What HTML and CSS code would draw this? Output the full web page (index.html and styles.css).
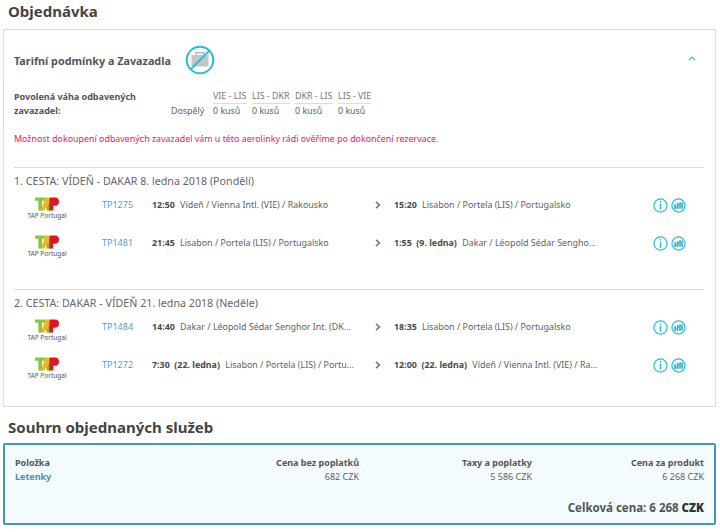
FILE: index.html
```html
<!DOCTYPE html>
<html lang="cs">
<head>
<meta charset="utf-8">
<title>Objednávka</title>
<link rel="stylesheet" href="styles.css">
</head>
<body>
<svg class="defs" width="0" height="0" aria-hidden="true">
  <defs>
    <symbol id="tap" viewBox="0 0 26 15">
      <path d="M0 0.5H11V4H7.6V14.5H3.6V4H0Z" fill="#8cc63f"/>
      <path d="M6.5 14.5L11.4 0.5H14.5L18 10V14.5H14.2L13.6 12.4H10.8L10.2 14.5Z" fill="#e8b81c"/>
      <path d="M12 14.5L14.5 7L17 14.5Z" fill="#7fbf3a"/>
      <path d="M15.5 0.5H22C25 0.5 26 2.5 26 4.8C26 7.4 24.4 9.4 21.5 9.4H19.6V14.5H15.5Z" fill="#e3141f"/>
    </symbol>
    <symbol id="info" viewBox="0 0 16 16">
      <circle cx="8" cy="8" r="7" fill="#fff" stroke="#2cbcd8" stroke-width="1.3"/>
      <rect x="7.2" y="3.2" width="1.6" height="1.7" fill="#2cbcd8"/>
      <rect x="7.2" y="6.2" width="1.6" height="6.4" fill="#2cbcd8"/>
    </symbol>
    <symbol id="seat" viewBox="0 0 16 16">
      <circle cx="8" cy="8" r="7" fill="#fff" stroke="#2cbcd8" stroke-width="1.3"/>
      <path d="M3.6 6.6H5.6V11.4H3.6ZM6.4 5.4H8V11.4H6.4ZM8.8 4.4H10.4V11.4H8.8ZM11 5.6H12.6V11.4H11Z" fill="#2ba6c9"/>
      <path d="M2.6 12.2L13.2 3.8" stroke="#2cbcd8" stroke-width="1"/>
    </symbol>
  </defs>
</svg>

<h1 class="heading">Objednávka</h1>

<section class="panel">
  <div class="tariff-head">
    <h2 class="tariff-title">Tarifní podmínky a Zavazadla</h2>
    <svg class="no-bag" viewBox="0 0 30 30" aria-hidden="true">
      <path d="M11 10V7.8H19V10" fill="none" stroke="#b5b5b5" stroke-width="1.4"/>
      <rect x="6.5" y="10" width="17" height="11.5" rx="1" fill="#c4c4c4"/>
      <circle cx="15" cy="15" r="13.3" fill="none" stroke="#2cbcd8" stroke-width="2"/>
      <path d="M24.4 5.6L5.6 24.4" stroke="#2cbcd8" stroke-width="2"/>
    </svg>
    <svg class="chevron" viewBox="0 0 8 5" aria-hidden="true"><path d="M0.8 4.2L4 1L7.2 4.2" fill="none" stroke="#2cbcd8" stroke-width="1.1"/></svg>
  </div>

  <div class="baggage">
    <div class="baggage-label">Povolená váha odbavených zavazadel:</div>
    <div class="baggage-table">
      <span></span>
      <span class="seg">VIE - LIS</span>
      <span class="seg">LIS - DKR</span>
      <span class="seg">DKR - LIS</span>
      <span class="seg">LIS - VIE</span>
      <span class="pax">Dospělý</span>
      <span class="cnt">0 kusů</span>
      <span class="cnt">0 kusů</span>
      <span class="cnt">0 kusů</span>
      <span class="cnt">0 kusů</span>
    </div>
  </div>

  <p class="notice">Možnost dokoupení odbavených zavazadel vám u této aerolinky rádi ověříme po dokončení rezervace.</p>

  <div class="journey">
    <h3 class="journey-title">1. CESTA: VÍDEŇ - DAKAR 8. ledna 2018 (Pondělí)</h3>
    <div class="flight">
      <div class="airline"><svg class="tap"><use href="#tap"/></svg><span class="tap-name">TAP Portugal</span></div>
      <a class="code">TP1275</a>
      <div class="point"><b>12:50</b> Vídeň / Vienna Intl. (VIE) / Rakousko</div>
      <svg class="arrow" viewBox="0 0 6 8"><path d="M1 0.8L4.4 4L1 7.2" fill="none" stroke="#777" stroke-width="1.6"/></svg>
      <div class="point"><b>15:20</b> Lisabon / Portela (LIS) / Portugalsko</div>
      <div class="icons"><svg class="ico"><use href="#info"/></svg><svg class="ico"><use href="#seat"/></svg></div>
    </div>
    <div class="flight">
      <div class="airline"><svg class="tap"><use href="#tap"/></svg><span class="tap-name">TAP Portugal</span></div>
      <a class="code">TP1481</a>
      <div class="point"><b>21:45</b> Lisabon / Portela (LIS) / Portugalsko</div>
      <svg class="arrow" viewBox="0 0 6 8"><path d="M1 0.8L4.4 4L1 7.2" fill="none" stroke="#777" stroke-width="1.6"/></svg>
      <div class="point"><b>1:55 &nbsp;(9. ledna)</b> Dakar / Léopold Sédar Sengho…</div>
      <div class="icons"><svg class="ico"><use href="#info"/></svg><svg class="ico"><use href="#seat"/></svg></div>
    </div>
  </div>

  <div class="journey">
    <h3 class="journey-title">2. CESTA: DAKAR - VÍDEŇ 21. ledna 2018 (Neděle)</h3>
    <div class="flight">
      <div class="airline"><svg class="tap"><use href="#tap"/></svg><span class="tap-name">TAP Portugal</span></div>
      <a class="code">TP1484</a>
      <div class="point"><b>14:40</b> Dakar / Léopold Sédar Senghor Int. (DK…</div>
      <svg class="arrow" viewBox="0 0 6 8"><path d="M1 0.8L4.4 4L1 7.2" fill="none" stroke="#777" stroke-width="1.6"/></svg>
      <div class="point"><b>18:35</b> Lisabon / Portela (LIS) / Portugalsko</div>
      <div class="icons"><svg class="ico"><use href="#info"/></svg><svg class="ico"><use href="#seat"/></svg></div>
    </div>
    <div class="flight">
      <div class="airline"><svg class="tap"><use href="#tap"/></svg><span class="tap-name">TAP Portugal</span></div>
      <a class="code">TP1272</a>
      <div class="point"><b>7:30 &nbsp;(22. ledna)</b> Lisabon / Portela (LIS) / Portu…</div>
      <svg class="arrow" viewBox="0 0 6 8"><path d="M1 0.8L4.4 4L1 7.2" fill="none" stroke="#777" stroke-width="1.6"/></svg>
      <div class="point"><b>12:00 &nbsp;(22. ledna)</b> Vídeň / Vienna Intl. (VIE) / Ra…</div>
      <div class="icons"><svg class="ico"><use href="#info"/></svg><svg class="ico"><use href="#seat"/></svg></div>
    </div>
  </div>
</section>

<h1 class="heading heading-summary">Souhrn objednaných služeb</h1>

<section class="summary">
  <div class="summary-grid">
    <b>Položka</b>
    <b class="num">Cena bez poplatků</b>
    <b class="num">Taxy a poplatky</b>
    <b class="num">Cena za produkt</b>
    <a class="item">Letenky</a>
    <span class="num">682 CZK</span>
    <span class="num">5 586 CZK</span>
    <span class="num">6 268 CZK</span>
  </div>
  <div class="total">Celková cena: 6 268 <strong>CZK</strong></div>
</section>
</body>
</html>
```

FILE: styles.css
```css
* { box-sizing: border-box; }
html, body { margin: 0; padding: 0; }
body {
  width: 720px;
  height: 532px;
  overflow: hidden;
  background: #fff;
  color: #5f5f5f;
  font-family: "Noto Sans", "Open Sans", sans-serif;
  font-size: 9px;
  line-height: 13px;
}
.defs { position: absolute; }
b { font-weight: 600; }

.heading {
  margin: 0;
  padding: 0 0 0 8px;
  height: 29px;
  color: #444;
  font-size: 15px;
  line-height: 23px;
  font-weight: 700;
}
.heading-summary { height: 36px; padding-top: 9px; }

.panel {
  width: 713px;
  height: 378px;
  margin-left: 3px;
  border: 1px solid #dcdcdc;
  padding: 0 11px 0 10px;
}
.tariff-head {
  display: flex;
  align-items: center;
  height: 59px;
}
.tariff-title {
  margin: 0;
  padding-top: 2px;
  font-size: 10.8px;
  line-height: 14px;
  font-weight: 700;
  color: #555;
}
.no-bag { width: 30px; height: 30px; margin-left: 14px; }
.chevron { width: 8px; height: 5px; margin-left: auto; margin-right: 8px; margin-bottom: 2px; }

.baggage { display: flex; height: 29px; }
.baggage-label {
  width: 125px;
  font-weight: 700;
  font-size: 9px;
  line-height: 14px;
  color: #555;
  padding-top: 1px;
}
.baggage-table {
  display: grid;
  grid-template-columns: 37px 34px 38px 38px 33px;
  grid-template-rows: 15px 14px;
  column-gap: 5px;
  font-size: 8.9px;
  margin-left: 32px;
}
.seg { border-bottom: 1px solid #dcdcdc; white-space: nowrap; line-height: 14px; color: #777; }
.cnt { line-height: 14px; white-space: nowrap; }
.pax { line-height: 14px; white-space: nowrap; }

.notice {
  margin: 14px 0 0;
  font-size: 8.9px;
  line-height: 13px;
  color: #e0245e;
  height: 35px;
}
.journey { border-top: 1px solid #dcdcdc; height: 122px; padding-top: 6px; }
.journey-title {
  margin: 0 0 4px;
  font-size: 10.7px;
  line-height: 14px;
  font-weight: 400;
  color: #666;
}
.flight {
  display: grid;
  grid-template-columns: 66px 72px 223px 19px 259px 1fr;
  align-items: start;
  height: 38px;
}
.airline {
  display: flex;
  flex-direction: column;
  align-items: center;
  padding-top: 5px;
}
.tap { width: 24px; height: 14px; display: block; }
.tap-name { font-size: 6.5px; line-height: 9px; color: #555; }
.code { color: #4f9fd0; font-size: 9px; padding-left: 22px; padding-top: 6px; }
.point {
  padding-top: 6px;
  white-space: nowrap;
  font-size: 8.9px;
}
.point b { color: #4a4a4a; font-weight: 700; margin-right: 3px; }
.arrow { width: 6px; height: 8px; margin-top: 9px; }
.icons { display: flex; gap: 3px; padding-top: 6px; }
.ico { width: 15px; height: 15px; display: block; }

.summary {
  width: 713px;
  height: 82px;
  margin-left: 3px;
  border: 2px solid #4a93b5;
  border-radius: 2px;
  background: #f3fbff;
  padding: 11px 10px 0 10px;
}
.summary-grid {
  display: grid;
  grid-template-columns: 150px 194px 173px 172px;
  line-height: 14px;
  font-size: 9px;
}
.summary-grid b { color: #555; font-weight: 700; }
.num { text-align: right; }
.item { color: #4a8fb5; font-weight: 700; }
.total {
  margin-top: 17px;
  text-align: right;
  font-size: 11.5px;
  line-height: 14px;
  font-weight: 700;
  color: #555;
}
.total strong { color: #333; }
```
